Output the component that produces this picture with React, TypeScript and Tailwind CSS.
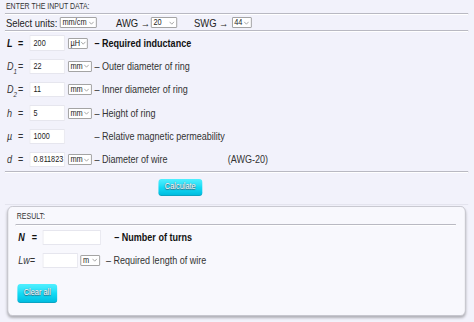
import React from "react";

const Chevron = () => (
  <svg width="7" height="4" viewBox="0 0 7 4" className="shrink-0">
    <path d="M0.8 0.8 L3.5 3.2 L6.2 0.8" fill="none" stroke="#8a8a8a" strokeWidth="0.8" />
  </svg>
);

const Sel = ({ v, w }: { v: string; w: string }) => (
  <span
    className={`flex items-center justify-between h-[11px] ${w} shrink-0 border border-[#9a9a9a] rounded-[1px] bg-white pl-[2px] pr-[2px] text-[9px] leading-none text-[#222]`}
  >
    <span>{v}</span>
    <Chevron />
  </span>
);

const Inp = ({ v, w }: { v: string; w: string }) => (
  <span
    className={`inline-flex items-center h-[15.5px] ${w} shrink-0 bg-white border border-[#e6e6ee] pl-[4px] text-[8.8px] leading-none text-[#222] overflow-hidden whitespace-nowrap`}
  >
    {v}
  </span>
);

const Hr = () => <div className="h-[1px] bg-[#b9b9c2] border-b border-white box-content" />;

function Row({
  sym,
  sub,
  bold,
  val,
  unit,
  unitW,
  desc,
  descBold,
  extra,
}: {
  sym: string;
  sub?: string;
  bold?: boolean;
  val: string;
  unit?: string;
  unitW?: string;
  desc: string;
  descBold?: boolean;
  extra?: string;
}) {
  return (
    <div className="flex items-center h-[23.3px]">
      <div className="w-[29.9px] shrink-0 pl-[2.4px] flex items-center text-[11px] text-[#333]">
        <span className={`w-[13.6px] shrink-0 italic ${bold ? "font-bold text-[#111]" : ""}`}>
          {sym}
          {sub && <sub className="text-[7.5px] align-[-2px]">{sub}</sub>}
        </span>
        <span className={bold ? "font-bold text-[#111]" : ""}>=</span>
      </div>
      <Inp v={val} w="w-[42.7px]" />
      <div className="w-[36.5px] shrink-0 pl-[4.2px] flex items-center">
        {unit && <Sel v={unit} w={unitW ?? "w-[29.3px]"} />}
      </div>
      <span
        className={`text-[11px] whitespace-nowrap ${descBold ? "font-bold text-[#111]" : "text-[#333]"} ${extra ? "w-[162.5px] shrink-0" : ""}`}
      >
        {desc}
      </span>
      {extra && <span className="text-[11px] text-[#333]">{extra}</span>}
    </div>
  );
}

const Btn = ({ label, w, h }: { label: string; w: string; h: string }) => (
  <div
    className={`${w} ${h} rounded-[4px] bg-gradient-to-b from-[#4ff0ff] via-[#14dcf5] to-[#00bde0] border-b border-[#0aa3c2] flex items-center justify-center text-[9px] text-white [text-shadow:0_0_1px_#4a6a80,0_1px_1px_#3a5a70]`}
  >
    {label}
  </div>
);

export default function App() {
  return (
    <div className="w-[474px] h-[322px] overflow-hidden bg-[#f2f2fb]">
      <div className="w-[578px] origin-top-left scale-x-[0.82] font-['Liberation_Sans',Arial,sans-serif] text-[#222]">
        <div className="pl-[6.1px] pr-[7.3px]">
          <div className="h-[13px] flex items-center pl-[1.2px] text-[8.5px] uppercase text-[#333]">
            Enter the input data:
          </div>
          <Hr />
          <div className="h-[14.5px] flex items-end pl-[1.2px] text-[11.5px] text-[#222]">
            <span className="w-[65.9px] shrink-0 leading-[13px] whitespace-nowrap">Select units:</span>
            <span className="flex mb-[1.3px]"><Sel v="mm/cm" w="w-[44.7px]" /></span>
            <span className="ml-[23.6px] w-[42.6px] shrink-0 leading-[13px] whitespace-nowrap">AWG →</span>
            <span className="flex mb-[1.3px]"><Sel v="20" w="w-[31.8px]" /></span>
            <span className="ml-[20.7px] w-[46px] shrink-0 leading-[13px] whitespace-nowrap">SWG →</span>
            <span className="flex mb-[1.3px]"><Sel v="44" w="w-[24.4px]" /></span>
          </div>
          <Hr />
          <div>
            <Row sym="L" bold val="200" unit="µH" unitW="w-[24.4px]" desc="– Required inductance" descBold />
            <Row sym="D" sub="1" val="22" unit="mm" desc="– Outer diameter of ring" />
            <Row sym="D" sub="2" val="11" unit="mm" desc="– Inner diameter of ring" />
            <Row sym="h" val="5" unit="mm" desc="– Height of ring" />
            <Row sym="µ" val="1000" desc="– Relative magnetic permeability" />
            <Row sym="d" val="0.811823" unit="mm" desc="– Diameter of wire" extra="(AWG-20)" />
          </div>
          <Hr />
          <div className="pt-[5.5px] pl-[186.9px]">
            <Btn label="Calculate" w="w-[53.7px]" h="h-[17.5px]" />
          </div>
          <div className="mt-[7.5px] h-[1px] bg-[#e4e4ee]" />
        </div>
        <div className="ml-[8.9px] mt-[1.4px] w-[559.4px] h-[110px] rounded-[6px] border border-[#c4c4cc] bg-[#f8f8fd] shadow-[0_2px_3px_rgba(0,0,0,0.28)] pl-[9.6px] pr-[11.2px]">
          <div className="h-[16.6px] flex items-end pb-[1px] pl-[1px] text-[8.5px] uppercase text-[#333]">
            Result:
          </div>
          <Hr />
          <div className="flex items-center h-[23px] mt-[0.2px]">
            <div className="w-[32.6px] shrink-0 pl-[2.8px] flex items-center text-[11px] font-bold text-[#111]">
              <span className="w-[16.4px] shrink-0 italic">N</span>
              <span>=</span>
            </div>
            <Inp v="" w="w-[71.1px]" />
            <span className="ml-[16.2px] text-[11px] font-bold text-[#111] whitespace-nowrap">– Number of turns</span>
          </div>
          <div className="flex items-center h-[23px]">
            <div className="w-[32.6px] shrink-0 pl-[2.8px] text-[11px] italic text-[#333]">Lw=</div>
            <Inp v="" w="w-[42.7px]" />
            <span className="ml-[3.6px] flex"><Sel v="m" w="w-[23.6px]" /></span>
            <span className="ml-[7.3px] text-[11px] text-[#333] whitespace-nowrap">– Required length of wire</span>
          </div>
          <div className="mt-[12.5px] pl-[1.6px]">
            <Btn label="Clear all" w="w-[48.8px]" h="h-[18.3px]" />
          </div>
        </div>
      </div>
    </div>
  );
}
